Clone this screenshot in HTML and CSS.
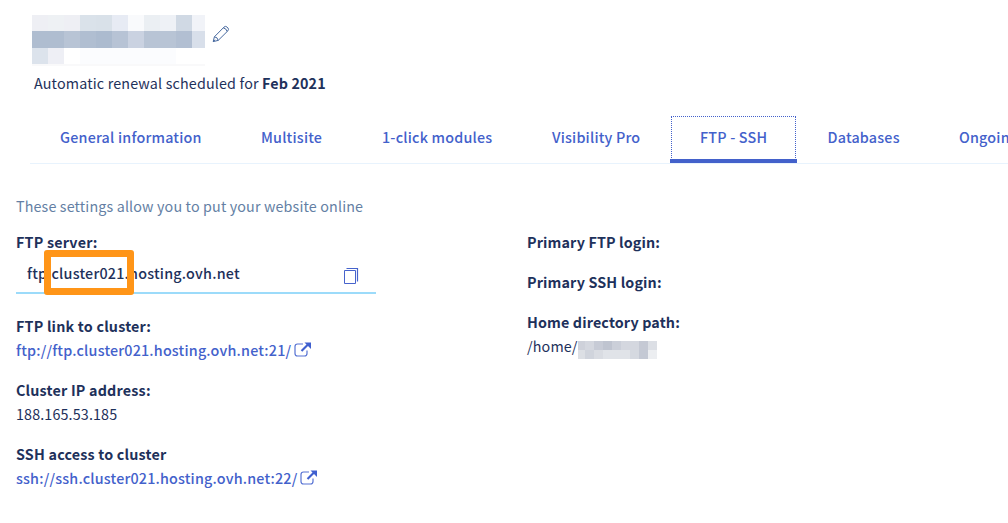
FILE: index.html
```html
<!DOCTYPE html>
<html lang="en">
<head>
<meta charset="utf-8">
<title>FTP - SSH</title>
<link rel="stylesheet" href="styles.css">
</head>
<body>
<header class="header">
  <div class="title">
    <svg class="title-mask" width="173" height="51" viewBox="0 0 173 51" shape-rendering="crispEdges">
      <g><rect width="16" height="17" fill="#eeeff4"/><rect x="16" width="16" height="17" fill="#eef1f4"/><rect x="32" width="16" height="17" fill="#eeeff4"/><rect x="48" width="16" height="17" fill="#dae2ea"/><rect x="64" width="16" height="17" fill="#d9e1e9"/><rect x="80" width="16" height="17" fill="#e7ebf4"/><rect x="96" width="16" height="17" fill="#f9fafc"/><rect x="112" width="16" height="17" fill="#ebeff3"/><rect x="128" width="16" height="17" fill="#eef1f6"/><rect x="144" width="16" height="17" fill="#d0d9e4"/><rect x="160" width="13" height="17" fill="#f1f3f8"/></g>
      <g><rect y="16" width="32" height="17" fill="#afbdd0"/><rect x="32" y="16" width="16" height="17" fill="#b8c4d5"/><rect x="48" y="16" width="16" height="17" fill="#b0bed1"/><rect x="64" y="16" width="16" height="17" fill="#acbbcf"/><rect x="80" y="16" width="16" height="17" fill="#b7c3d5"/><rect x="96" y="16" width="16" height="17" fill="#cad2e1"/><rect x="112" y="16" width="32" height="17" fill="#b8c4d5"/><rect x="144" y="16" width="16" height="17" fill="#b2bfd2"/><rect x="160" y="16" width="13" height="17" fill="#d8dfea"/></g>
      <g><rect y="33" width="16" height="16" fill="#dce3ec"/><rect x="16" y="33" width="16" height="16" fill="#eeeff5"/><rect x="48" y="33" width="96" height="16" fill="#fbfcfe"/><rect y="49" width="173" height="2" fill="#f9f9fa"/></g>
    </svg>
    <svg class="pencil" width="18" height="18" viewBox="0 0 18 18" fill="none" stroke="#47699f" stroke-width="1"><path d="M1.2 16.6 2.4 11.8 12 2.1Q13.4.7 15 2L15.9 2.9Q17.2 4.4 15.8 5.9L6.2 15.4ZM2.4 11.8Q5.6 12 6.2 15.4M11.3 2.9Q14.5 3.5 15.1 6.5M1.2 16.6 3.2 14.8"/></svg>
  </div>
  <p class="renewal"><span class="renewal-text">Automatic renewal scheduled for</span> <b class="renewal-date">Feb 2021</b></p>
</header>
<nav class="tabs">
  <a class="tab general">General information</a>
  <a class="tab multisite">Multisite</a>
  <a class="tab modules">1-click modules</a>
  <a class="tab visibility">Visibility Pro</a>
  <a class="tab active">FTP - SSH</a>
  <a class="tab databases">Databases</a>
  <a class="tab ongoing">Ongoing</a>
</nav>
<main>
  <p class="intro"><span>These settings allow you to put your website online</span></p>
  <div class="columns">
    <section class="left">
      <h2 class="label">FTP server:</h2>
      <div class="field">
        <span class="field-value">ftp.cluster021.hosting.ovh.net</span>
        <svg class="copy" width="16" height="18" viewBox="0 0 16 18" fill="none" stroke="#4663cc"><path d="M1.5 3.5h11v13H1.5z"/><path d="M3.5 1.5h11v13" stroke-width="1.2"/></svg>
        <div class="highlight"></div>
      </div>
      <div class="entry">
        <h2 class="label">FTP link to cluster:</h2>
        <a class="link"><span>ftp://ftp.cluster021.hosting.ovh.net:21/</span><svg class="external" width="17" height="15" viewBox="0 0 17 15"><path d="M9 2H3.5Q1 2 1 4.5v7Q1 14 3.5 14h7Q13 14 13 11.5V8.5" fill="none" stroke="#5672d3" stroke-width="1.2"/><path d="M7.5 9 14 2.5" stroke="#4060cf" stroke-width="2.2"/><path d="M10.5.5H17V7Z" fill="#4060cf"/></svg></a>
      </div>
      <div class="entry">
        <h2 class="label">Cluster IP address:</h2>
        <p class="value"><span class="ip">188.165.53.185</span></p>
      </div>
      <div class="entry">
        <h2 class="label">SSH access to cluster</h2>
        <a class="link"><span>ssh://ssh.cluster021.hosting.ovh.net:22/</span><svg class="external" width="17" height="15" viewBox="0 0 17 15"><path d="M9 2H3.5Q1 2 1 4.5v7Q1 14 3.5 14h7Q13 14 13 11.5V8.5" fill="none" stroke="#5672d3" stroke-width="1.2"/><path d="M7.5 9 14 2.5" stroke="#4060cf" stroke-width="2.2"/><path d="M10.5.5H17V7Z" fill="#4060cf"/></svg></a>
      </div>
    </section>
    <section class="right">
      <h2 class="label">Primary FTP login:</h2>
      <h2 class="label">Primary SSH login:</h2>
      <div>
        <h2 class="label">Home directory path:</h2>
        <p class="value"><span>/home/</span><svg class="path-mask" width="79" height="18" viewBox="0 0 79 18" shape-rendering="crispEdges"><rect width="79" height="18" fill="#d4d7df"/><rect width="7" height="9" fill="#ced1da"/><rect x="16" width="9" height="9" fill="#c7cbd6"/><rect x="25" width="9" height="9" fill="#bfc4d0"/><rect x="34" width="9" height="9" fill="#cbcfd9"/><rect x="61" width="9" height="9" fill="#c5c9d4"/><rect x="70" width="9" height="9" fill="#dcdfe5"/><rect y="9" width="7" height="9" fill="#dcdfe4"/><rect x="7" y="9" width="9" height="9" fill="#d0d4dc"/><rect x="16" y="9" width="9" height="9" fill="#d9dce2"/><rect x="25" y="9" width="27" height="9" fill="#e0e3e8"/><rect x="52" y="9" width="9" height="9" fill="#d5d9e0"/><rect x="61" y="9" width="9" height="9" fill="#c4c9d4"/><rect x="70" y="9" width="9" height="9" fill="#eceef1"/></svg></p>
      </div>
    </section>
  </div>
</main>
</body>
</html>
```
FILE: styles.css
```css
* { box-sizing: border-box; }
body { margin: 0; background: #fff; color: #1e315b; font: 14.32px/24px "Noto Sans CJK SC", "Noto Sans CJK JP", sans-serif; letter-spacing: .14px; overflow: hidden; height: 523px; }
p, h2 { margin: 0; font-size: inherit; }
.header { padding: 15px 0 0 32px; height: 115px; }
.title { display: flex; gap: 7px; }
.title-mask { display: block; }
.pencil { margin-top: 10px; }
.renewal { margin: 5px 0 0 2px; white-space: nowrap; }
.renewal-text { letter-spacing: .16px; }
.renewal-date { letter-spacing: .12px; }
.tabs { display: flex; height: 49px; margin-left: 30px; border-bottom: 1px solid #e8f3fd; white-space: nowrap; color: #4361cb; font-weight: 500; letter-spacing: .2px; overflow: hidden; }
.tab { height: 48px; padding: 10px 0 0 30px; flex: none; }
.general { width: 201px; }
.multisite { width: 121px; }
.modules { width: 170px; }
.visibility { width: 148px; }
.active { width: 127px; border-bottom: 4px solid #4361cb; outline: 1px dotted #4361cb; outline-offset: -2px; }
.databases { width: 132px; padding-left: 30.5px; }
.ongoing { flex: 1 1 0; min-width: 0; overflow: hidden; }
.intro { margin: 30px 0 12px 16px; color: #647fa4; }
.columns { display: grid; grid-template-columns: 511px 1fr; padding-left: 16px; }
.label { font-weight: 700; line-height: 24px; letter-spacing: .2px; }
.left { width: 360px; }
.field { position: relative; display: flex; height: 40px; justify-content: space-between; padding: 7px 17px 0 11px; margin-bottom: 20px; border-bottom: 2px solid #9cdbfa; font-weight: 500; letter-spacing: .22px; }
.copy { margin-top: 6px; }
.highlight { position: absolute; left: 28px; top: -4px; width: 90px; height: 45px; border: 7px solid #ff9518; border-radius: 3px; }
.entry { margin-bottom: 16px; }
.link { display: flex; gap: 3px; color: #4361cb; font-weight: 500; letter-spacing: .19px; }
.external { margin-top: 4px; }
.value { display: flex; }
.right { display: flex; flex-direction: column; gap: 16px; }
.right .label { letter-spacing: .14px; }
.path-mask { margin-top: 7px; }
```
